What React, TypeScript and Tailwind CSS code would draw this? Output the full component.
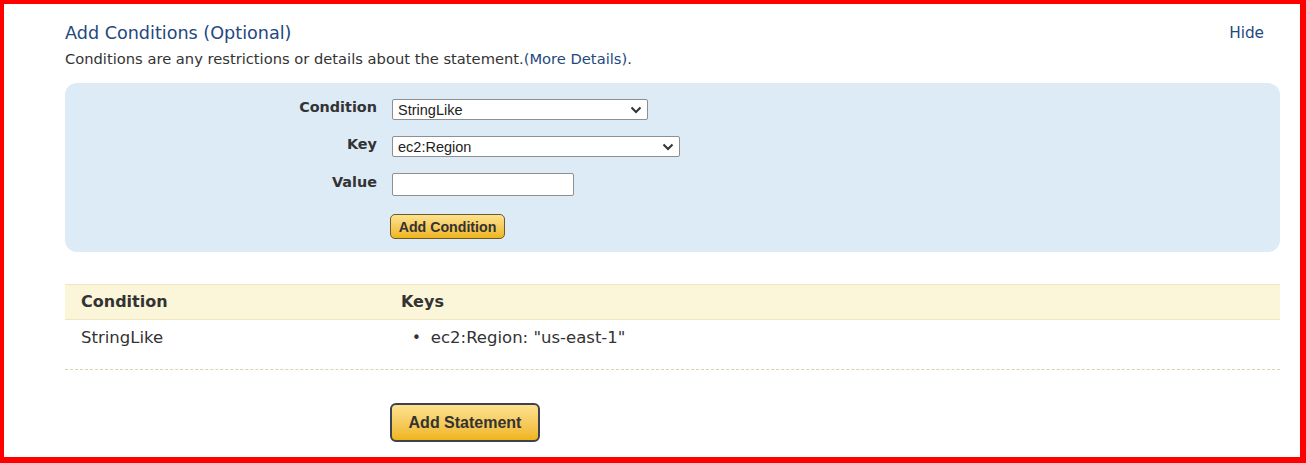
import React from "react";

function Chevron() {
  return (
    <svg width="12" height="8" viewBox="0 0 12 8" className="shrink-0">
      <path d="M1.5 1.5 L6 6 L10.5 1.5" fill="none" stroke="#333" strokeWidth="2" />
    </svg>
  );
}

function FakeSelect({ value, width }: { value: string; width: string }) {
  return (
    <div
      className={`${width} h-[21px] bg-white border border-[#8f8f8f] rounded-[2px] flex items-center justify-between pl-[5px] pr-[5px] text-[14.5px] leading-[17px] text-[#222]`}
      style={{ fontFamily: '"Liberation Sans", Arial, sans-serif' }}
    >
      <span className="pt-[1px]">{value}</span>
      <Chevron />
    </div>
  );
}

export default function App() {
  const verd = { fontFamily: '"DejaVu Sans", Verdana, sans-serif' };
  return (
    <div className="w-[1306px] h-[463px] bg-white border-t-[4px] border-l-[4px] border-r-[6px] border-b-[6px] border-[#ff0000] overflow-hidden" style={verd}>
      <div className="pl-[61px] pr-[20px] pt-[19px]">
        <div className="flex justify-between items-start">
          <div className="text-[17.6px] leading-[20px] text-[#24477f]">Add Conditions (Optional)</div>
          <div className="text-[15.3px] leading-[20px] text-[#24477f] pr-[16px]">Hide</div>
        </div>
        <div className="text-[14.7px] leading-[18px] text-[#333] mt-[7px]">
          Conditions are any restrictions or details about the statement.<span className="text-[#24477f]">(More Details)</span>.
        </div>

        <div className="mt-[15px] bg-[#ddebf7] rounded-[12px] h-[169px] pt-[16px]">
          <div className="grid grid-cols-[312px_1fr] gap-x-[15px] items-start">
            <div className="text-right text-[14.4px] leading-[18px] font-bold text-[#333] -mt-[1px]">Condition</div>
            <FakeSelect value="StringLike" width="w-[256px]" />
          </div>
          <div className="grid grid-cols-[312px_1fr] gap-x-[15px] items-start mt-[16px]">
            <div className="text-right text-[14.4px] leading-[18px] font-bold text-[#333] -mt-[1px]">Key</div>
            <FakeSelect value="ec2:Region" width="w-[288px]" />
          </div>
          <div className="grid grid-cols-[312px_1fr] gap-x-[15px] items-start mt-[16px]">
            <div className="text-right text-[14.4px] leading-[18px] font-bold text-[#333]">Value</div>
            <div className="w-[182px] h-[23px] bg-white border border-[#8f8f8f] rounded-[2px]" />
          </div>
          <div className="grid grid-cols-[312px_1fr] gap-x-[15px] items-center mt-[18px]">
            <div />
            <div className="-ml-[2px]">
              <button
                className="h-[25px] w-[115px] rounded-[5px] border border-[#6b5a2a] bg-gradient-to-b from-[#fde28e] to-[#efb50f] text-[14.2px] leading-[16px] font-bold text-[#333]"
                style={{ fontFamily: '"Liberation Sans", Arial, sans-serif' }}
              >
                Add Condition
              </button>
            </div>
          </div>
        </div>

        <div className="mt-[32px]">
          <div className="h-[36px] bg-[#fbf6d9] border-t border-b border-[#efe6bd] grid grid-cols-[320px_1fr] items-center text-[16px] leading-[20px] font-bold text-[#333]">
            <div className="pl-[16px]">Condition</div>
            <div className="pl-[16px]">Keys</div>
          </div>
          <div className="h-[50px] border-b border-dashed border-[#ddd3a8] grid grid-cols-[320px_1fr] items-start pt-[8px] text-[16.5px] leading-[20px] text-[#333]">
            <div className="pl-[16px]">StringLike</div>
            <div className="pl-[27px] flex items-center">
              <span className="mr-[10px] text-[15px] leading-[20px]">•</span>
              <span>ec2:Region: "us-east-1"</span>
            </div>
          </div>
        </div>

        <div className="pl-[325px] mt-[33px]">
          <button
            className="h-[39px] w-[150px] rounded-[6px] border-2 border-[#3d4250] bg-gradient-to-b from-[#fde28e] to-[#efb50f] text-[16px] font-bold text-[#333]"
            style={{ fontFamily: '"Liberation Sans", Arial, sans-serif' }}
          >
            Add Statement
          </button>
        </div>
      </div>
    </div>
  );
}
